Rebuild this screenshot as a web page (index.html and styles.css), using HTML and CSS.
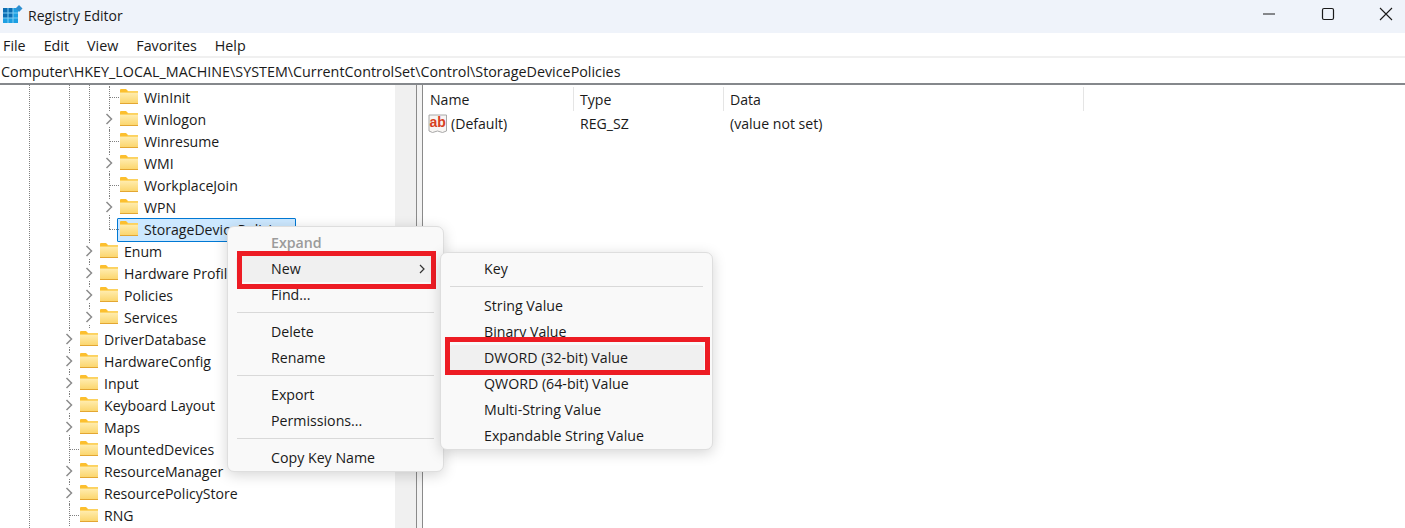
FILE: index.html
```html
<!DOCTYPE html>
<html lang="en">
<head>
<meta charset="utf-8">
<title>Registry Editor</title>
<link rel="stylesheet" href="styles.css">
</head>
<body>
<svg class="defs" width="0" height="0" aria-hidden="true">
  <defs>
    <linearGradient id="fg" x1="0" y1="0" x2="0" y2="1">
      <stop offset="0" stop-color="#ffedb0"/>
      <stop offset="1" stop-color="#fbd468"/>
    </linearGradient>
    <symbol id="folder" viewBox="0 0 18 15">
      <path d="M0 1a1 1 0 0 1 1-1h5l2 2h9a1 1 0 0 1 1 1v2H0z" fill="#fcbf2e"/>
      <path d="M0 3.500h18V14.400a.6.6 0 0 1-.6.6H.6A.6.6 0 0 1 0 14.400z" fill="url(#fg)"/>
      <path d="M0 14h18v1H0z" fill="#e3a632"/>
      <path d="M0 3h7l1.400-1H18v1.500H0z" fill="#fcd25e"/>
    </symbol>
    <symbol id="chev" viewBox="0 0 8 12">
      <path d="M1.500 1l5 5-5 5" fill="none" stroke="#8c8c8c" stroke-width="1.500"/>
    </symbol>
  </defs>
</svg>
<div class="window">
  <header class="titlebar">
    <svg class="logo" viewBox="0 0 22 22" width="22" height="22">
      <path d="M1 3h15v15H1z" fill="#1d9fe2"/>
      <path d="M1 3h10v10H1z" fill="#0b6db3"/>
      <path d="M6 3v15M11 3v15M1 8h15M1 13h15" stroke="#7fcdf3" stroke-width="1"/>
      <path d="M17 0l3.500 3.500L17 7l-3.500-3.500z" fill="#2e8fd0"/>
    </svg>
    <span class="title">Registry Editor</span>
    <div class="controls">
      <svg width="14" height="14" viewBox="0 0 14 14"><path d="M1 7h12" stroke="#1a1a1a" stroke-width="1"/></svg>
      <svg width="14" height="14" viewBox="0 0 14 14"><rect x="1.500" y="1.500" width="11" height="11" rx="1.500" fill="none" stroke="#1a1a1a" stroke-width="1.200"/></svg>
      <svg width="14" height="14" viewBox="0 0 14 14"><path d="M1 1l12 12M13 1L1 13" stroke="#1a1a1a" stroke-width="1.100"/></svg>
    </div>
  </header>
  <nav class="menubar">
    <span>File</span><span>Edit</span><span>View</span><span>Favorites</span><span>Help</span>
  </nav>
  <div class="address">Computer\HKEY_LOCAL_MACHINE\SYSTEM\CurrentControlSet\Control\StorageDevicePolicies</div>
  <main class="panes">
    <section class="tree">
      <i class="guide g1"></i><i class="guide g2"></i><i class="guide g3"></i>
      <div class="row l3 leaf"><svg class="fold"><use href="#folder"/></svg><span>WinInit</span></div>
      <div class="row l3 node"><svg class="ch"><use href="#chev"/></svg><svg class="fold"><use href="#folder"/></svg><span>Winlogon</span></div>
      <div class="row l3 leaf"><svg class="fold"><use href="#folder"/></svg><span>Winresume</span></div>
      <div class="row l3 node"><svg class="ch"><use href="#chev"/></svg><svg class="fold"><use href="#folder"/></svg><span>WMI</span></div>
      <div class="row l3 leaf"><svg class="fold"><use href="#folder"/></svg><span>WorkplaceJoin</span></div>
      <div class="row l3 node"><svg class="ch"><use href="#chev"/></svg><svg class="fold"><use href="#folder"/></svg><span>WPN</span></div>
      <div class="row l3 leaf last sel"><svg class="fold"><use href="#folder"/></svg><span>StorageDevicePolicies</span></div>
      <div class="row l2 node"><svg class="ch"><use href="#chev"/></svg><svg class="fold"><use href="#folder"/></svg><span>Enum</span></div>
      <div class="row l2 node"><svg class="ch"><use href="#chev"/></svg><svg class="fold"><use href="#folder"/></svg><span>Hardware Profiles</span></div>
      <div class="row l2 node"><svg class="ch"><use href="#chev"/></svg><svg class="fold"><use href="#folder"/></svg><span>Policies</span></div>
      <div class="row l2 node"><svg class="ch"><use href="#chev"/></svg><svg class="fold"><use href="#folder"/></svg><span>Services</span></div>
      <div class="row l1 node"><svg class="ch"><use href="#chev"/></svg><svg class="fold"><use href="#folder"/></svg><span>DriverDatabase</span></div>
      <div class="row l1 node"><svg class="ch"><use href="#chev"/></svg><svg class="fold"><use href="#folder"/></svg><span>HardwareConfig</span></div>
      <div class="row l1 node"><svg class="ch"><use href="#chev"/></svg><svg class="fold"><use href="#folder"/></svg><span>Input</span></div>
      <div class="row l1 node"><svg class="ch"><use href="#chev"/></svg><svg class="fold"><use href="#folder"/></svg><span>Keyboard Layout</span></div>
      <div class="row l1 node"><svg class="ch"><use href="#chev"/></svg><svg class="fold"><use href="#folder"/></svg><span>Maps</span></div>
      <div class="row l1 leaf"><svg class="fold"><use href="#folder"/></svg><span>MountedDevices</span></div>
      <div class="row l1 node"><svg class="ch"><use href="#chev"/></svg><svg class="fold"><use href="#folder"/></svg><span>ResourceManager</span></div>
      <div class="row l1 node"><svg class="ch"><use href="#chev"/></svg><svg class="fold"><use href="#folder"/></svg><span>ResourcePolicyStore</span></div>
      <div class="row l1 leaf"><svg class="fold"><use href="#folder"/></svg><span>RNG</span></div>
    </section>
    <div class="scrollbar"></div>
    <div class="splitter"></div>
    <section class="list">
      <div class="lhead">
        <span class="c1">Name</span><span class="c2">Type</span><span class="c3">Data</span>
      </div>
      <div class="lrow">
        <span class="c1 named">
          <svg class="ab" viewBox="0 0 20 20" width="20" height="20">
            <path d="M1 1h17.500v16l-4 1.500-5-1.500-5 1.500-3.500-1.500z" fill="#f7f5f3" stroke="#a8a8a8" stroke-width="1"/>
            <text class="abt" x="9.700" y="13" text-anchor="middle">ab</text>
          </svg>
          (Default)
        </span>
        <span class="c2">REG_SZ</span><span class="c3">(value not set)</span>
      </div>
    </section>
  </main>

  <div class="menu main-menu">
    <div class="item dim">Expand</div>
    <div class="item hot">New<svg class="arrow" width="8" height="12" viewBox="0 0 8 12"><path d="M2 2l4 4-4 4" fill="none" stroke="#333" stroke-width="1.200"/></svg></div>
    <div class="item">Find...</div>
    <hr>
    <div class="item">Delete</div>
    <div class="item">Rename</div>
    <hr>
    <div class="item">Export</div>
    <div class="item">Permissions...</div>
    <hr>
    <div class="item">Copy Key Name</div>
    <div class="mark mark-new"></div>
  </div>
  <div class="menu sub-menu">
    <div class="item">Key</div>
    <hr>
    <div class="item">String Value</div>
    <div class="item">Binary Value</div>
    <div class="item hot">DWORD (32-bit) Value</div>
    <div class="item">QWORD (64-bit) Value</div>
    <div class="item">Multi-String Value</div>
    <div class="item">Expandable String Value</div>
    <div class="mark mark-dword"></div>
  </div>
</div>
</body>
</html>
```
FILE: styles.css
```css
* { box-sizing: border-box; }
html, body { margin: 0; height: 100%; overflow: hidden; }
body { font-family: "Open Sans", "Noto Sans", sans-serif; font-size: 14.100px; color: #1a1a1a; background: #fff; }
.defs { position: absolute; }
.window { position: relative; width: 1405px; height: 528px; display: flex; flex-direction: column; overflow: hidden; }

.titlebar { height: 33px; background: #eff3fa; display: flex; align-items: center; flex: none; }
.logo { margin-left: 2px; margin-top: -1px; }
.title { margin-left: 4px; margin-top: -3px; font-size: 14px; }
.controls { margin-left: auto; display: flex; gap: 44.500px; align-items: center; padding-right: 12px; margin-top: -5px; }
.controls svg { display: block; }

.menubar { height: 23px; flex: none; display: flex; gap: 18px; padding-left: 3px; align-items: center; background: #fff; line-height: 25px; font-size: 14.300px; }
.menubar span { padding-top: 1px; }
.address { height: 29px; flex: none; border-top: 2px solid #f0f0f0; border-bottom: 2px solid #85888c; padding-left: 1px; line-height: 27px; white-space: nowrap; font-size: 14.330px; }

.panes { flex: 1; display: flex; min-height: 0; }
.tree { position: relative; width: 395px; flex: none; padding-top: 1px; overflow: hidden; }
.scrollbar { width: 21px; flex: none; background: #f0f0f0; }
.splitter { width: 7px; flex: none; background: #f3f3f3; border-left: 1px solid #8a8a8a; border-right: 1px solid #8a8a8a; }
.list { flex: 1; }

.guide { position: absolute; top: 0; width: 0; border-left: 1px dotted #808080; }
.g1 { left: 29px; height: 443px; }
.g2 { left: 69px; height: 243px; }
.g3 { left: 89px; height: 155px; }

.row { position: relative; height: 22px; display: flex; align-items: center; white-space: nowrap; }
.row.l3 { padding-left: 120px; }
.row.l2 { padding-left: 100px; }
.row.l1 { padding-left: 80px; }
.fold { width: 18px; height: 15px; flex: none; margin-bottom: 1px; }
.row span { margin-left: 6px; }
.ch { width: 8px; height: 12px; position: absolute; top: 5px; }
.l3 .ch { left: 105px; }
.l2 .ch { left: 85px; }
.l1 .ch { left: 65px; }

.leaf::before { content: ""; position: absolute; top: 0; height: 22px; width: 0; border-left: 1px dotted #808080; }
.leaf::after { content: ""; position: absolute; top: 11px; height: 0; width: 10px; border-top: 1px dotted #808080; }
.l3.leaf::before { left: 109px; }
.l3.leaf::after { left: 109px; }
.l1.leaf::before { left: 69px; }
.l1.leaf::after { left: 69px; }
.last::before { height: 11px; }
.node::before { content: ""; position: absolute; top: 0; height: 3px; width: 0; border-left: 1px dotted #808080; }
.node::after { content: ""; position: absolute; top: 19px; height: 3px; width: 0; border-left: 1px dotted #808080; }
.l3.node::before, .l3.node::after { left: 109px; }
.l2.node::before, .l2.node::after { left: 89px; }
.l1.node::before, .l1.node::after { left: 69px; }

.sel { z-index: 0; }
.sel span::before { content: ""; position: absolute; z-index: -1; left: 117px; top: 0; width: 177px; height: 22px; background: #cce8ff; border: 1px solid #0078d4; border-radius: 1px; }

.lhead { height: 26px; display: flex; padding-top: 2px; line-height: 26px; }
.lrow { height: 24px; display: flex; line-height: 24px; margin-top: 1px; }
.c1, .c2, .c3 { display: block; height: 100%; }
.c1 { width: 150px; padding-left: 7px; }
.c2 { width: 150px; padding-left: 6px; }
.c3 { width: 360px; padding-left: 6px; }
.lhead span { border-right: 1px solid #e5e5e5; height: 24px; }
.lhead span:first-child { width: 151px; }
.lrow .c1 { width: 151px; }
.named { display: flex; align-items: center; gap: 3px; padding-left: 5px; }
.ab { flex: none; }
.abt { font-family: "Liberation Sans", sans-serif; font-weight: 700; font-size: 14px; fill: #d8401f; }

.menu { position: absolute; background: #f9f9f9; border: 1px solid #dedede; border-radius: 7px; box-shadow: 0 3px 14px rgba(0, 0, 0, .17); line-height: 26px; font-size: 14.200px; }
.main-menu { left: 227px; top: 226px; width: 217px; height: 246px; padding: 3px 9px 0; }
.sub-menu { left: 440px; top: 252px; width: 273px; height: 198px; padding: 3px 9px 0; }
.item { height: 26px; position: relative; padding-left: 35px; margin: 0 -1px; white-space: nowrap; }
.dim { color: #9b9b9b; font-weight: 600; }
.hot { background: #f0f0f0; border-radius: 4px; }
.arrow { position: absolute; right: 9px; top: 7px; }
.menu hr { height: 1px; border: 0; background: #d9d9d9; margin: 4px 0 6px; }
.mark { position: absolute; border: 5px solid #ed1c24; }
.mark-new { left: 9px; top: 24px; width: 199px; height: 38px; }
.mark-dword { left: 4px; top: 84px; width: 265px; height: 38px; }
```
